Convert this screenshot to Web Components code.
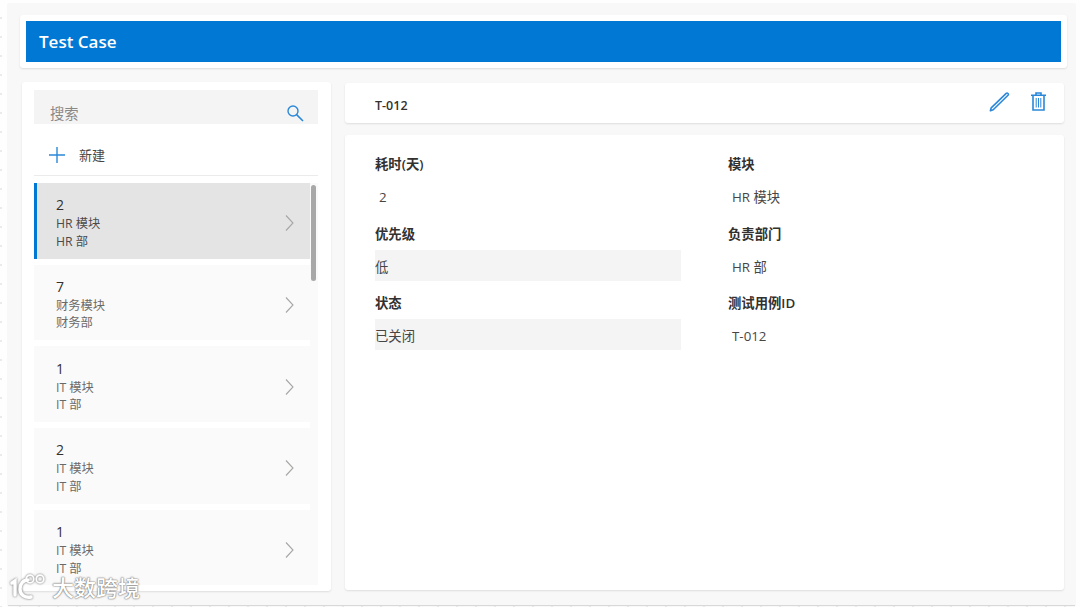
<!DOCTYPE html>
<html lang="zh">
<head>
<meta charset="utf-8">
<title>Test Case</title>
<style>
html, body { margin: 0; height: 100%; }
body {
    width: 1080px;
    height: 607px;
    overflow: hidden;
    box-sizing: border-box;
    padding: 3px 5px 2px 8px;
    background-color: #fefefe;
    background-image: radial-gradient(circle at 2px 2px, #ebebeb 1px, transparent 1.5px);
    background-size: 19px 19px;
    background-position: -1px -3px;
    font: 13px "Open Sans", "Noto Sans CJK SC", sans-serif;
    color: #323130;
}
</style>
</head>
<body>
<tc-app>
    <tc-header slot="header">Test Case</tc-header>
    <tc-sidebar slot="side">
        <tc-item value="2" module="HR 模块" dept="HR 部" selected></tc-item>
        <tc-item value="7" module="财务模块" dept="财务部"></tc-item>
        <tc-item value="1" module="IT 模块" dept="IT 部"></tc-item>
        <tc-item value="2" module="IT 模块" dept="IT 部"></tc-item>
        <tc-item value="1" module="IT 模块" dept="IT 部"></tc-item>
    </tc-sidebar>
    <tc-toolbar slot="main">T-012</tc-toolbar>
    <tc-details slot="main">
        <tc-field label="耗时(天)" value="2"></tc-field>
        <tc-field label="模块" value="HR 模块"></tc-field>
        <tc-field label="优先级" value="低" choice></tc-field>
        <tc-field label="负责部门" value="HR 部"></tc-field>
        <tc-field label="状态" value="已关闭" choice></tc-field>
        <tc-field label="测试用例ID" value="T-012"></tc-field>
    </tc-details>
</tc-app>
<script>
const BLUE = "#2b88d8";

customElements.define("tc-app", class extends HTMLElement {
    constructor() {
        super()
            .attachShadow({ mode: "open" })
            .innerHTML = `
            <style>
            :host {
                display: flex;
                flex-direction: column;
                position: relative;
                height: 100%;
                box-sizing: border-box;
                padding: 12px 8px 14px 12px;
                background: #f8f8f8;
                box-shadow: 0 1px 1px #d8d8d8;
            }
            .row {
                display: flex;
                gap: 14px;
                flex: 1;
                min-height: 0;
                margin: 14px 3px 0 2px;
            }
            .right {
                flex: 1;
                display: flex;
                flex-direction: column;
                gap: 12px;
                padding: 1px 0;
                min-width: 0;
            }
            .mark {
                position: absolute;
                left: 2px;
                bottom: 4px;
                display: flex;
                align-items: center;
                gap: 5px;
                color: #fff;
                font: 500 22px "Noto Sans CJK SC", sans-serif;
                line-height: 24px;
                text-shadow: 0 0 2px #666, 0 0 1px #666;
            }
            .mark svg { filter: drop-shadow(0 0 1px #666); }
            .mark span { position: relative; top: -1px; }
            </style>
            <slot name="header"></slot>
            <div class="row">
                <slot name="side"></slot>
                <div class="right"><slot name="main"></slot></div>
            </div>
            <div class="mark">
                <svg width="37" height="28" viewBox="0 0 37 28" fill="none" stroke="#fff" stroke-width="3.4" stroke-linecap="round">
                    <path d="M2 10l3-2v14"/>
                    <path d="M18 7c-5 0-8 4-8 9 0 6 5 9 11 8"/>
                    <circle cx="20" cy="6" r="3.8" stroke-width="1.8"/>
                    <circle cx="30" cy="6" r="3.8" stroke-width="1.8"/>
                </svg>
                <span>大数跨境</span>
            </div>`;
    }
});

customElements.define("tc-header", class extends HTMLElement {
    constructor() {
        super()
            .attachShadow({ mode: "open" })
            .innerHTML = `
            <style>
            :host {
                display: block;
                padding: 6px;
                background: #fff;
                border-radius: 3px;
                box-shadow: 0 1px 2px #ddd;
            }
            div {
                height: 41px;
                padding-left: 13px;
                display: flex;
                align-items: center;
                background: #0078d4;
                color: #fff;
                font: 600 17px "Open Sans", sans-serif;
            }
            </style>
            <div><slot></slot></div>`;
    }
});

customElements.define("tc-sidebar", class extends HTMLElement {
    constructor() {
        super()
            .attachShadow({ mode: "open" })
            .innerHTML = `
            <style>
            :host {
                display: flex;
                flex-direction: column;
                flex: 0 0 309px;
                box-sizing: border-box;
                padding: 8px 13px 6px 12px;
                background: #fff;
                border-radius: 3px;
                box-shadow: 0 1px 2px #ddd;
            }
            .search {
                height: 34px;
                display: flex;
                align-items: center;
                justify-content: space-between;
                padding: 0 14px 0 16px;
                background: #f4f4f4;
                color: #8a8886;
                font-size: 14.3px;
            }
            .search span { position: relative; top: 5px; }
            .search svg { position: relative; top: 6px; }
            .new {
                display: flex;
                align-items: center;
                gap: 14px;
                padding: 10px 0 0 15px;
                box-sizing: border-box;
                border-bottom: 1px solid #ebebeb;
                height: 52px;
                font-size: 13px;
                color: #484644;
            }
            .list {
                position: relative;
                flex: 1;
                min-height: 0;
                margin-top: 7px;
                padding-right: 8px;
                background: linear-gradient(90deg, transparent calc(100% - 8px), #fafafa 0);
                display: flex;
                flex-direction: column;
                gap: 6.1px;
                overflow: hidden;
            }
            .thumb {
                position: absolute;
                right: 2px;
                top: 2px;
                width: 5px;
                height: 96px;
                border-radius: 3px;
                background: #a8a8a8;
            }
            </style>
            <div class="search">
                <span>搜索</span>
                <svg width="18" height="18" viewBox="0 0 18 18" fill="none" stroke="${BLUE}" stroke-width="1.4">
                    <circle cx="7" cy="7" r="5"/><path d="M10.6 10.6l6.4 6.4" stroke-width="1.6"/>
                </svg>
            </div>
            <div class="new">
                <svg width="16" height="16" viewBox="0 0 16 16" stroke="${BLUE}" stroke-width="1.4"><path d="M8 0v16M0 8h16"/></svg>
                <span>新建</span>
            </div>
            <div class="list"><slot></slot><div class="thumb"></div></div>`;
    }
});

customElements.define("tc-item", class extends HTMLElement {
    constructor() {
        super().attachShadow({ mode: "open" });
    }
    connectedCallback() {
        const sel = this.hasAttribute("selected");
        this.shadowRoot.innerHTML = `
            <style>
            :host {
                display: flex;
                align-items: center;
                justify-content: space-between;
                flex: 0 0 75.6px;
                box-sizing: border-box;
                padding: 0 16px 0 ${sel ? 19 : 22}px;
                background: ${sel ? "#e4e4e4" : "#fafafa"};
                border-left: ${sel ? "3px solid #0078d4" : "0"};
            }
            .num { font-size: 14px; line-height: 19px; color: #323130; position: relative; top: -1px; }
            .sub { font-size: 12.25px; line-height: 17.5px; color: ${sel ? "#4a4a4a" : "#6b6967"}; }
            .text { padding-top: 5px; }
            svg { margin-top: 5px; }
            </style>
            <div class="text">
                <div class="num">${this.getAttribute("value")}</div>
                <div class="sub">${this.getAttribute("module")}</div>
                <div class="sub">${this.getAttribute("dept")}</div>
            </div>
            <svg width="9" height="16" viewBox="0 0 9 16" fill="none" stroke="#a8a6a4" stroke-width="1.1"><path d="M1 .5L8 8l-7 7.5"/></svg>`;
    }
});

customElements.define("tc-toolbar", class extends HTMLElement {
    constructor() {
        super()
            .attachShadow({ mode: "open" })
            .innerHTML = `
            <style>
            :host {
                display: flex;
                align-items: center;
                justify-content: space-between;
                flex: 0 0 40px;
                box-sizing: border-box;
                padding: 0 18px 0 30px;
                background: #fff;
                border-radius: 3px;
                box-shadow: 0 1px 2px #ddd;
                font-weight: 600;
                font-size: 12.5px;
            }
            .id { position: relative; top: 2px; }
            .tools { display: flex; align-items: center; gap: 21px; margin-bottom: 3px; }
            </style>
            <span class="id"><slot></slot></span>
            <div class="tools">
                <svg width="21" height="20" viewBox="0 0 21 20" fill="none" stroke="${BLUE}" stroke-width="1.6" stroke-linejoin="round">
                    <path d="M17.2 1.4c.6-.5 1.3-.4 1.8.1s.6 1.2 0 1.8L4.2 17.8 1.4 18.8l.8-3z"/>
                </svg>
                <svg width="15" height="19" viewBox="0 0 15 19" fill="none" stroke="${BLUE}" stroke-width="1.6">
                    <path d="M0 3.2h15M5 3V1h5v2M2 3.5V18h11V3.5"/>
                    <path d="M5.2 6v9.5M7.5 6v9.5M9.8 6v9.5" stroke-width="1"/>
                </svg>
            </div>`;
    }
});

customElements.define("tc-details", class extends HTMLElement {
    constructor() {
        super()
            .attachShadow({ mode: "open" })
            .innerHTML = `
            <style>
            :host {
                display: grid;
                grid-template-columns: 306px 306px;
                grid-auto-rows: 69.7px;
                column-gap: 47px;
                align-content: start;
                flex: 1;
                box-sizing: border-box;
                padding: 18px 30px 0;
                background: #fff;
                border-radius: 3px;
                box-shadow: 0 1px 2px #ddd;
            }
            </style>
            <slot></slot>`;
    }
});

customElements.define("tc-field", class extends HTMLElement {
    constructor() {
        super().attachShadow({ mode: "open" });
    }
    connectedCallback() {
        const choice = this.hasAttribute("choice");
        this.shadowRoot.innerHTML = `
            <style>
            :host { display: block; }
            .label {
                height: 27px;
                line-height: 22px;
                font-weight: 600;
                font-size: 13.33px;
                color: #323130;
            }
            .value {
                height: 31px;
                line-height: 34px;
                padding-left: ${choice ? 0 : 4}px;
                background: ${choice ? "#f4f4f4" : "transparent"};
                font-size: 13.33px;
                color: #484644;
            }
            </style>
            <div class="label">${this.getAttribute("label")}</div>
            <div class="value">${this.getAttribute("value")}</div>`;
    }
});
</script>
</body>
</html>
